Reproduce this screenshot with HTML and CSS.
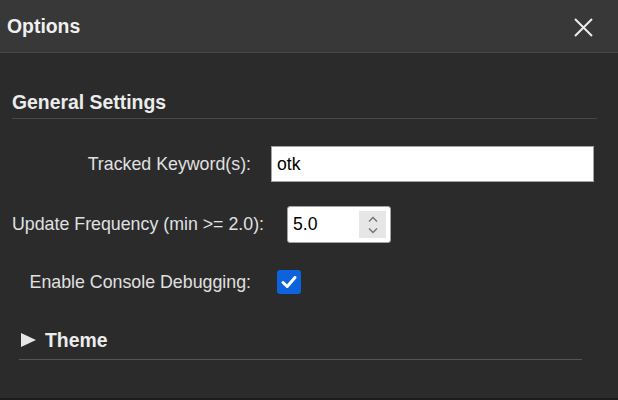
FILE: index.html
```html
<!DOCTYPE html>
<html lang="en">
<head>
<meta charset="utf-8">
<title>Options</title>
<link rel="stylesheet" href="styles.css">
</head>
<body>
<div class="dialog">
  <header class="header">
    <h1 class="title">Options</h1>
    <button class="close" aria-label="Close">
      <svg width="19" height="19" viewBox="0 0 19 19"><path d="M1 1 L18 18 M18 1 L1 18" stroke="#ececec" stroke-width="2" fill="none"/></svg>
    </button>
  </header>
  <main class="content">
    <h2 class="section-title">General Settings</h2>
    <div class="row row-keywords">
      <label class="label">Tracked Keyword(s):</label>
      <input class="text-input" type="text" value="otk">
    </div>
    <div class="row row-frequency">
      <label class="label label-auto">Update Frequency (min &gt;= 2.0):</label>
      <div class="number-box">
        <input class="number-input" type="text" value="5.0">
        <span class="spinner">
          <svg width="10" height="20" viewBox="0 0 10 20"><path d="M1 6.5 L5 2.5 L9 6.5 M1 13.5 L5 17.5 L9 13.5" stroke="#707070" stroke-width="1.3" fill="none"/></svg>
        </span>
      </div>
    </div>
    <div class="row row-debug">
      <label class="label">Enable Console Debugging:</label>
      <span class="checkbox">
        <svg width="24" height="24" viewBox="0 0 24 24"><path d="M6 12.5 L10.2 16.5 L18 7.5" stroke="#fff" stroke-width="3" fill="none" stroke-linecap="round" stroke-linejoin="round"/></svg>
      </span>
    </div>
    <div class="theme">
      <div class="theme-summary">
        <svg class="triangle" width="15" height="14" viewBox="0 0 15 14"><polygon points="0,0 15,7 0,14" fill="#e6e6e6"/></svg>
        <span class="theme-title">Theme</span>
      </div>
    </div>
  </main>
</div>
</body>
</html>
```

FILE: styles.css
```css
* {
  box-sizing: border-box;
}

html, body {
  margin: 0;
  padding: 0;
  background: #2b2b2b;
}

body {
  font-family: "Liberation Sans", Arial, sans-serif;
  color: #e2e2e2;
}

.dialog {
  width: 618px;
  height: 400px;
  background: #2b2b2b;
  border-bottom: 2px solid #1c1c1c;
  overflow: hidden;
}

.header {
  height: 53px;
  background: #383838;
  border-bottom: 1px solid #474747;
  display: flex;
  align-items: center;
  justify-content: space-between;
  padding: 0 25px 0 7px;
}

.title {
  margin: 0;
  font-size: 19.4px;
  font-weight: bold;
  color: #f0f0f0;
  line-height: 24px;
}

.close {
  background: none;
  border: 0;
  padding: 0;
  margin-top: 3px;
  width: 19px;
  height: 19px;
  display: flex;
}

.content {
  display: flex;
  flex-direction: column;
}

.section-title {
  margin: 37px 21px 0 12px;
  padding-bottom: 4px;
  font-size: 19.4px;
  font-weight: bold;
  line-height: 24px;
  color: #ececec;
  border-bottom: 1px solid #474747;
}

.row {
  display: flex;
  align-items: center;
  margin-left: 12px;
}

.label {
  font-size: 17.8px;
  color: #e0e0e0;
  width: 239px;
  text-align: right;
  white-space: nowrap;
}

.label-auto {
  width: auto;
}

.row-keywords {
  margin-top: 27px;
  gap: 20px;
}

.row-frequency {
  margin-top: 24px;
  gap: 23px;
}

.row-debug {
  margin-top: 27px;
  gap: 26px;
}

.text-input {
  width: 323px;
  height: 36px;
  border: 1px solid #a3a3a3;
  background: #fff;
  padding: 0 5px;
  font-family: "Liberation Sans", Arial, sans-serif;
  font-size: 17.6px;
  color: #000;
  outline: none;
}

.number-box {
  width: 104px;
  height: 37px;
  border: 1px solid #a3a3a3;
  border-radius: 3px;
  background: #fff;
  display: flex;
  align-items: center;
  padding: 0 4px 0 5px;
}

.number-input {
  flex: 1;
  min-width: 0;
  border: 0;
  padding: 0;
  background: transparent;
  font-family: "Liberation Sans", Arial, sans-serif;
  font-size: 17.6px;
  color: #000;
  outline: none;
}

.spinner {
  width: 27px;
  height: 27px;
  background: #e6e6e6;
  display: flex;
  align-items: center;
  justify-content: center;
}

.checkbox {
  width: 24px;
  height: 24px;
  border-radius: 3px;
  background: #0c63dc;
  display: flex;
}

.theme {
  margin: 34px 36px 0 19px;
}

.theme-summary {
  display: flex;
  align-items: center;
  gap: 9px;
  padding: 0 0 7px 2px;
  border-bottom: 1px solid #555;
  line-height: 24px;
}

.triangle {
  display: block;
}

.theme-title {
  font-size: 19.4px;
  font-weight: bold;
  color: #ececec;
}
```
